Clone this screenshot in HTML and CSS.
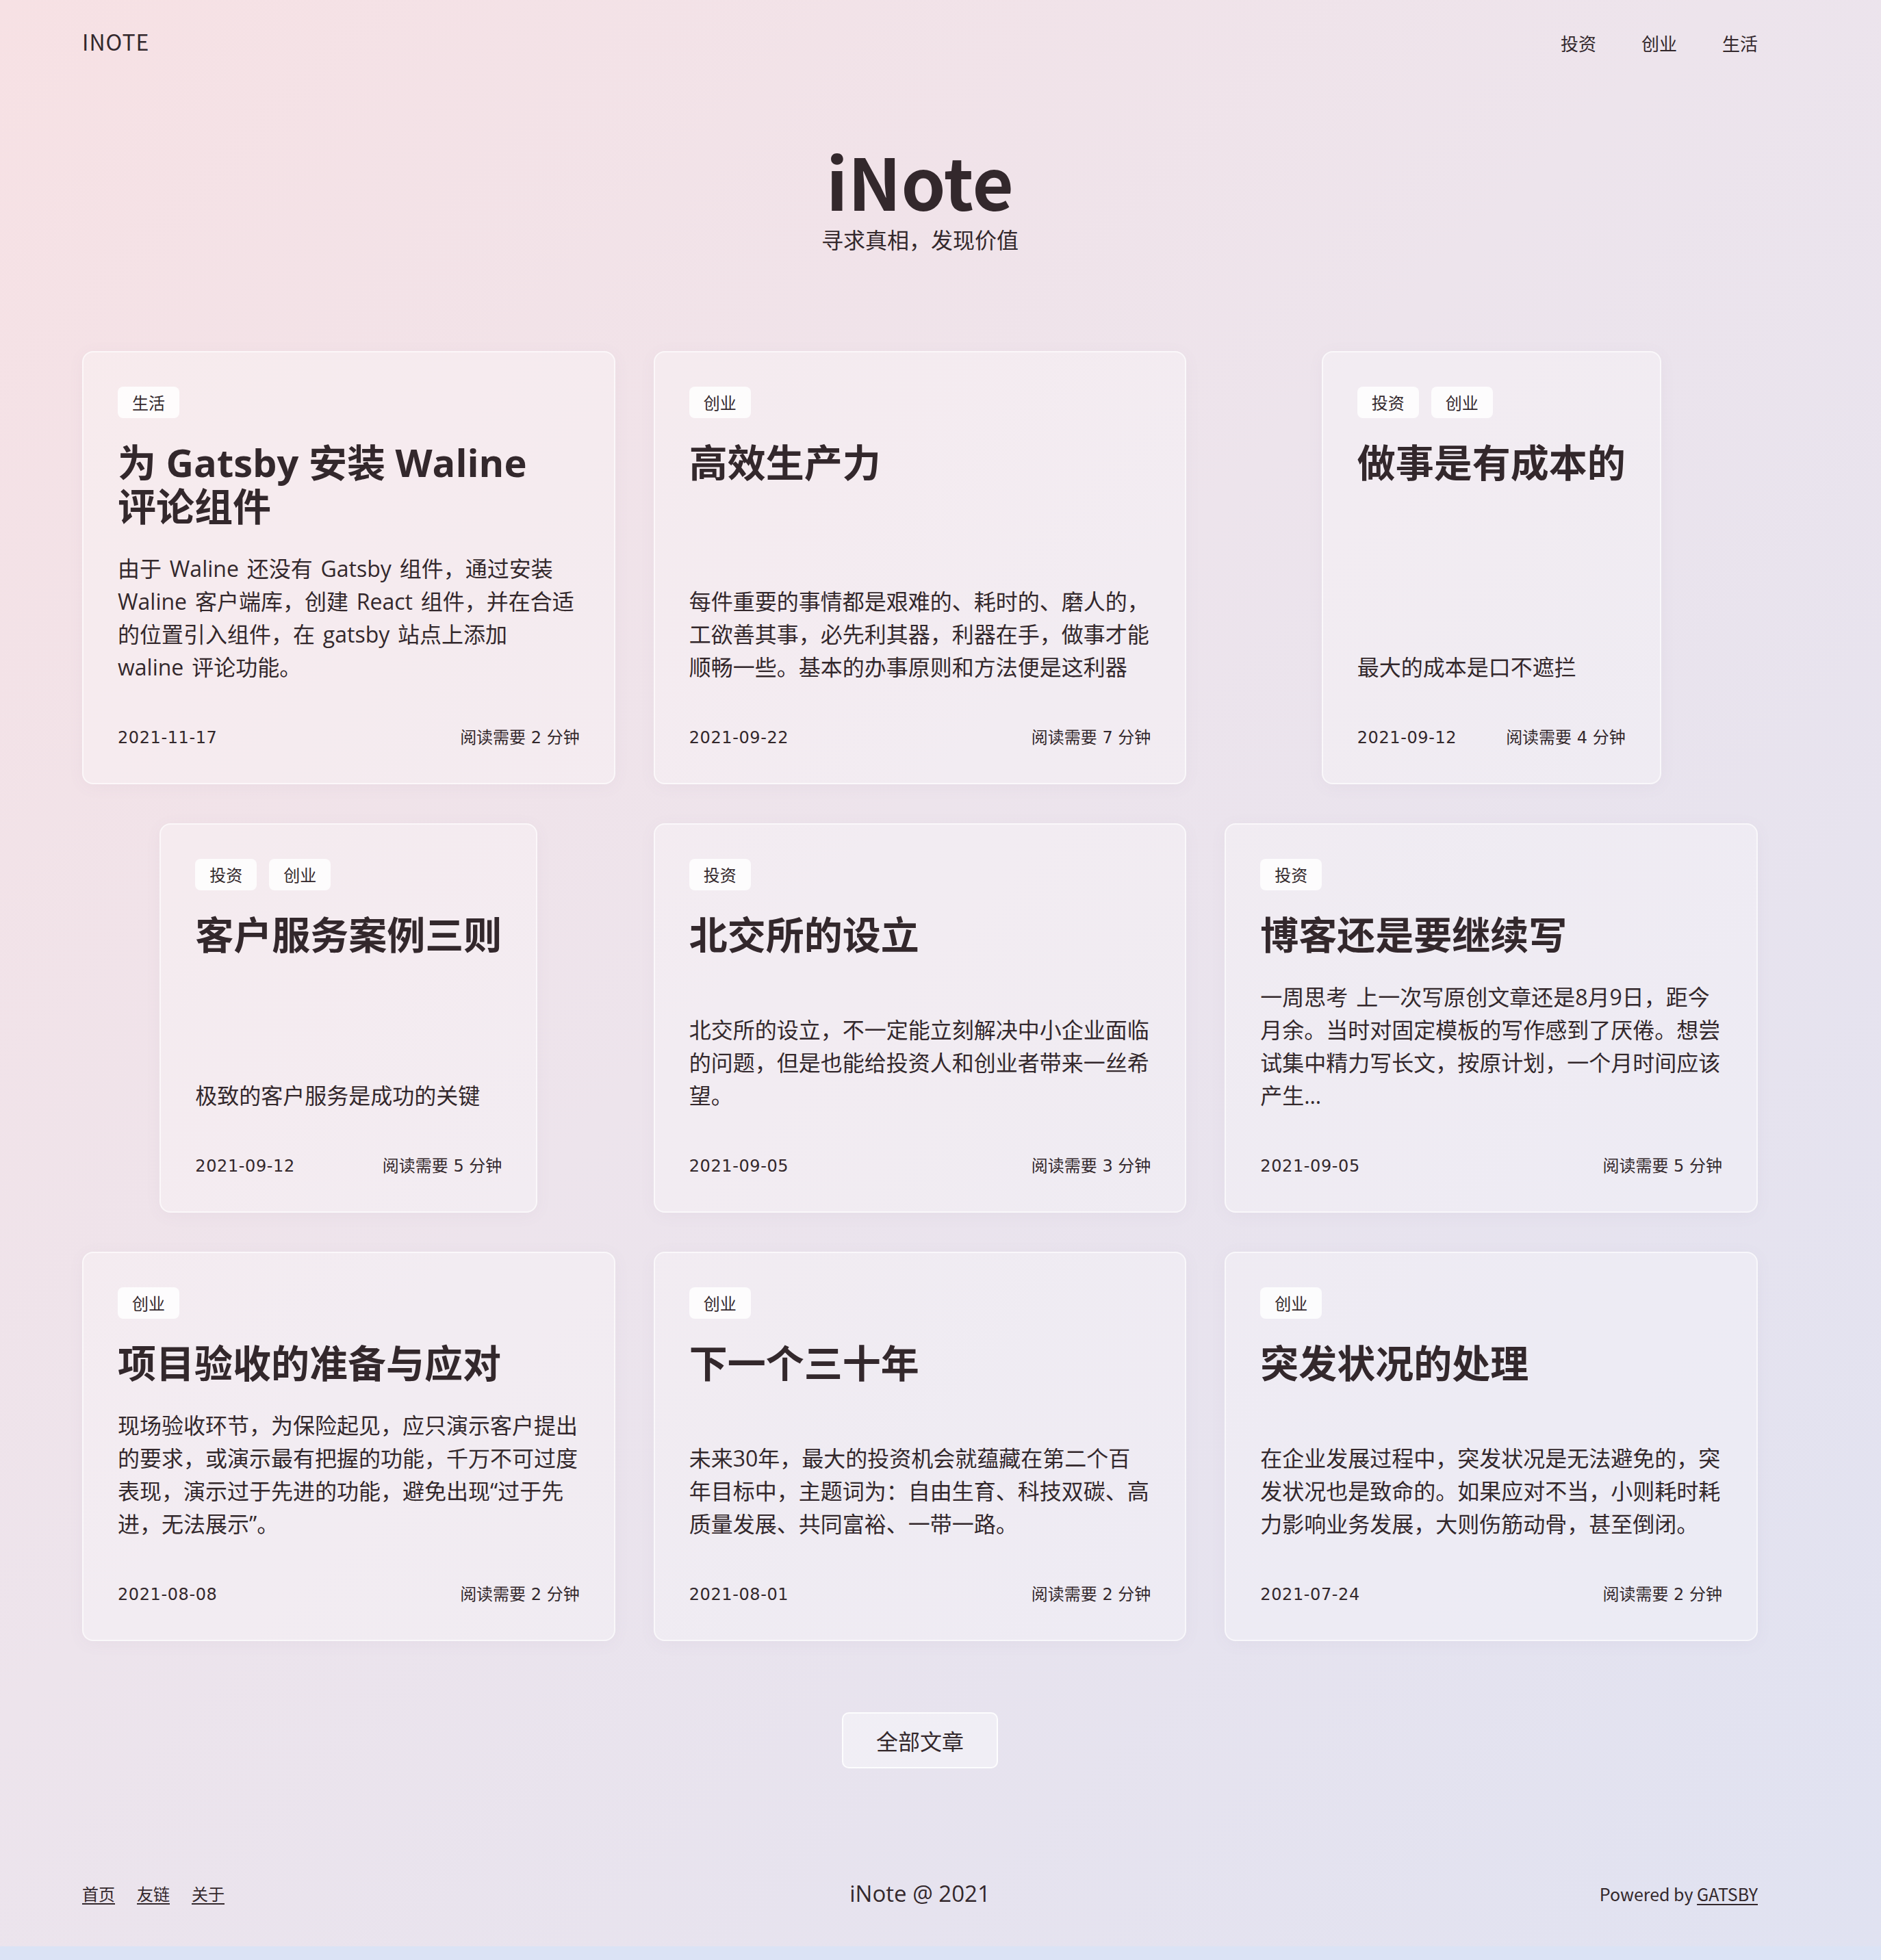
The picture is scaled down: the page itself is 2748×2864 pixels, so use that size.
FILE: index.html
```html
<!DOCTYPE html>
<html lang="zh-CN">
<head>
<meta charset="utf-8">
<title>iNote</title>
<link rel="stylesheet" href="styles.css">
</head>
<body>
<div class="page">
  <header class="site-header">
    <a class="brand" href="#">INOTE</a>
    <nav class="nav">
      <a href="#">投资</a>
      <a href="#">创业</a>
      <a href="#">生活</a>
    </nav>
  </header>

  <section class="hero">
    <h1 class="hero-title">iNote</h1>
    <p class="hero-sub">寻求真相，发现价值</p>
  </section>

  <main class="grid">
    <article class="card">
      <div class="tags"><span class="tag">生活</span></div>
      <h2 class="card-title">为 Gatsby 安装 Waline 评论组件</h2>
      <p class="card-desc">由于 Waline 还没有 Gatsby 组件，通过安装 Waline 客户端库，创建 React 组件，并在合适的位置引入组件，在 gatsby 站点上添加 waline 评论功能。</p>
      <div class="meta"><span class="date">2021-11-17</span><span>阅读需要 2 分钟</span></div>
    </article>
    <article class="card">
      <div class="tags"><span class="tag">创业</span></div>
      <h2 class="card-title">高效生产力</h2>
      <p class="card-desc">每件重要的事情都是艰难的、耗时的、磨人的，工欲善其事，必先利其器，利器在手，做事才能顺畅一些。基本的办事原则和方法便是这利器</p>
      <div class="meta"><span class="date">2021-09-22</span><span>阅读需要 7 分钟</span></div>
    </article>
    <article class="card">
      <div class="tags"><span class="tag">投资</span><span class="tag">创业</span></div>
      <h2 class="card-title">做事是有成本的</h2>
      <p class="card-desc">最大的成本是口不遮拦</p>
      <div class="meta"><span class="date">2021-09-12</span><span>阅读需要 4 分钟</span></div>
    </article>
    <article class="card">
      <div class="tags"><span class="tag">投资</span><span class="tag">创业</span></div>
      <h2 class="card-title">客户服务案例三则</h2>
      <p class="card-desc">极致的客户服务是成功的关键</p>
      <div class="meta"><span class="date">2021-09-12</span><span>阅读需要 5 分钟</span></div>
    </article>
    <article class="card">
      <div class="tags"><span class="tag">投资</span></div>
      <h2 class="card-title">北交所的设立</h2>
      <p class="card-desc">北交所的设立，不一定能立刻解决中小企业面临的问题，但是也能给投资人和创业者带来一丝希望。</p>
      <div class="meta"><span class="date">2021-09-05</span><span>阅读需要 3 分钟</span></div>
    </article>
    <article class="card">
      <div class="tags"><span class="tag">投资</span></div>
      <h2 class="card-title">博客还是要继续写</h2>
      <p class="card-desc">一周思考 上一次写原创文章还是8月9日，距今月余。当时对固定模板的写作感到了厌倦。想尝试集中精力写长文，按原计划，一个月时间应该产生…</p>
      <div class="meta"><span class="date">2021-09-05</span><span>阅读需要 5 分钟</span></div>
    </article>
    <article class="card">
      <div class="tags"><span class="tag">创业</span></div>
      <h2 class="card-title">项目验收的准备与应对</h2>
      <p class="card-desc">现场验收环节，为保险起见，应只演示客户提出的要求，或演示最有把握的功能，千万不可过度表现，演示过于先进的功能，避免出现“过于先进，无法展示”。</p>
      <div class="meta"><span class="date">2021-08-08</span><span>阅读需要 2 分钟</span></div>
    </article>
    <article class="card">
      <div class="tags"><span class="tag">创业</span></div>
      <h2 class="card-title">下一个三十年</h2>
      <p class="card-desc">未来30年，最大的投资机会就蕴藏在第二个百年目标中，主题词为：自由生育、科技双碳、高质量发展、共同富裕、一带一路。</p>
      <div class="meta"><span class="date">2021-08-01</span><span>阅读需要 2 分钟</span></div>
    </article>
    <article class="card">
      <div class="tags"><span class="tag">创业</span></div>
      <h2 class="card-title">突发状况的处理</h2>
      <p class="card-desc">在企业发展过程中，突发状况是无法避免的，突发状况也是致命的。如果应对不当，小则耗时耗力影响业务发展，大则伤筋动骨，甚至倒闭。</p>
      <div class="meta"><span class="date">2021-07-24</span><span>阅读需要 2 分钟</span></div>
    </article>
  </main>

  <div class="more">
    <a class="btn" href="#">全部文章</a>
  </div>

  <footer class="site-footer">
    <nav class="footer-links">
      <a href="#">首页</a>
      <a href="#">友链</a>
      <a href="#">关于</a>
    </nav>
    <div class="copyright">iNote @ 2021</div>
    <div class="powered">Powered by <a href="#">GATSBY</a></div>
  </footer>
</div>
</body>
</html>
```

FILE: styles.css
```css
html {
  background: #dbe3f5;
}

body {
  margin: 0;
  background: linear-gradient(135deg, #f7e1e4 0%, #ede4ec 45%, #e0e2f1 100%);
  color: #33282c;
  font-family: "Noto Sans CJK SC", "Noto Sans", sans-serif;
}

a {
  color: inherit;
  text-decoration: none;
}

.page {
  width: 2448px;
  margin-left: 120px;
}

/* header */
.site-header {
  height: 120px;
  display: flex;
  align-items: center;
  justify-content: space-between;
}

.brand {
  font-size: 32px;
  line-height: 48px;
  letter-spacing: 1px;
}

.nav {
  display: flex;
  gap: 66px;
  font-size: 26px;
  line-height: 40px;
  padding-top: 6px;
}

/* hero */
.hero {
  padding-top: 80px;
  text-align: center;
}

.hero-title {
  margin: 0;
  font-size: 104px;
  line-height: 125px;
  font-weight: 700;
}

.hero-sub {
  margin: 0;
  font-size: 32px;
  line-height: 48px;
}

/* grid */
.grid {
  margin-top: 140px;
  display: grid;
  grid-template-columns: repeat(3, 1fr);
  column-gap: 56px;
  row-gap: 57px;
  justify-items: center;
}

.card {
  box-sizing: border-box;
  width: fit-content;
  max-width: 100%;
  display: flex;
  flex-direction: column;
  padding: 50px 50px 46px;
  background: rgba(255, 255, 255, 0.3);
  border: 2px solid rgba(255, 255, 255, 0.6);
  border-radius: 16px;
  box-shadow: 0 4px 24px rgba(120, 100, 130, 0.05);
}

.tags {
  display: flex;
  gap: 18px;
}

.tag {
  font-size: 24px;
  line-height: 30px;
  padding: 8px 21px;
  background: rgba(255, 255, 255, 0.82);
  border-radius: 8px;
}

.card-title {
  margin: 32px 0 0;
  font-family: "Open Sans", "Noto Sans CJK SC", sans-serif;
  font-size: 56px;
  line-height: 64px;
  font-weight: 700;
  word-break: keep-all;
}

.card-desc {
  margin: auto 0 0;
  padding-top: 36px;
  font-family: "Open Sans", "Noto Sans CJK SC", sans-serif;
  font-size: 32px;
  line-height: 48px;
  word-spacing: 3.5px;
}

.meta {
  margin-top: 60px;
  display: flex;
  justify-content: space-between;
  gap: 24px;
  font-family: "DejaVu Sans", "Noto Sans CJK SC", sans-serif;
  font-size: 24px;
  line-height: 39px;
}

.date {
  letter-spacing: 0.6px;
}

/* more button */
.more {
  margin-top: 104px;
  display: flex;
  justify-content: center;
}

.btn {
  font-size: 32px;
  line-height: 48px;
  padding: 15px 48px;
  background: rgba(255, 255, 255, 0.4);
  border: 2px solid rgba(255, 255, 255, 0.85);
  border-radius: 10px;
}

/* footer */
.site-footer {
  margin-top: 159px;
  padding-bottom: 53px;
  display: grid;
  grid-template-columns: 1fr auto 1fr;
  align-items: center;
}

.footer-links {
  display: flex;
  gap: 32px;
  font-size: 24px;
  line-height: 48px;
}

.footer-links a,
.powered a {
  text-decoration: underline;
  text-underline-offset: 4px;
}

.copyright {
  font-family: "Open Sans", "Noto Sans CJK SC", sans-serif;
  font-size: 33px;
  line-height: 48px;
}

.powered {
  justify-self: end;
  font-size: 25px;
  line-height: 48px;
}
```
